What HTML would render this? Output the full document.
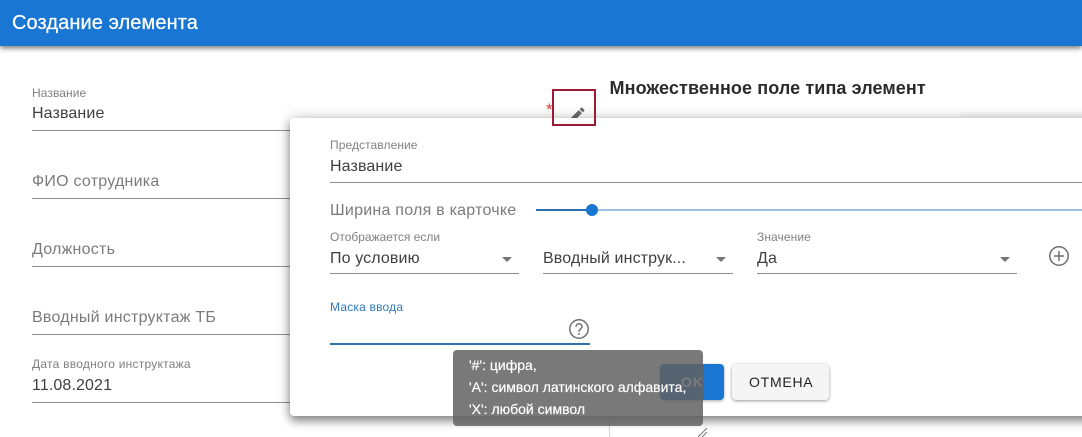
<!DOCTYPE html>
<html lang="ru"><head><meta charset="utf-8"><title>Создание элемента</title>
<style>
html,body{margin:0;padding:0;background:#fff}
#p{position:relative;width:1082px;height:437px;overflow:hidden;background:#fff;font-family:"Liberation Sans",sans-serif;color:#3c3c3c}
.t{position:absolute;white-space:nowrap;line-height:1}
.l{font-size:12px;color:#808080;letter-spacing:.08px}
.v{font-size:16px;color:#3f3f3f;letter-spacing:.12px}
.g{font-size:16px;color:#7b7b7b;letter-spacing:.24px}
.u{position:absolute;height:1px;background:#8e8e8e}
.a{position:absolute;width:0;height:0;border-left:5px solid transparent;border-right:5px solid transparent;border-top:5px solid #757575}
.tip{font-size:14px;color:#fff;-webkit-text-stroke:.2px #fff}
</style></head><body><div id="p">
<div style="position:absolute;left:0;top:0;width:1082px;height:46px;background:#1976d2;box-shadow:0 2px 5px rgba(0,0,0,.55);z-index:2"></div>
<div class="t" style="left:12px;top:13px;font-size:20px;letter-spacing:.1px;color:#fff;-webkit-text-stroke:.25px #fff;z-index:3">Создание элемента</div>

<div class="t l" style="left:32px;top:87px">Название</div>
<div class="t v" style="left:32px;top:106px">Название</div>
<div class="u" style="left:32px;top:130px;width:258px"></div>
<div class="t g" style="left:32px;top:174px">ФИО сотрудника</div>
<div class="u" style="left:32px;top:198px;width:258px"></div>
<div class="t g" style="left:32px;top:242px">Должность</div>
<div class="u" style="left:32px;top:266px;width:258px"></div>
<div class="t g" style="left:32px;top:310px">Вводный инструктаж ТБ</div>
<div class="u" style="left:32px;top:334px;width:258px"></div>
<div class="t l" style="left:32px;top:358px;letter-spacing:.24px">Дата вводного инструктажа</div>
<div class="t v" style="left:32px;top:378px">11.08.2021</div>
<div class="u" style="left:32px;top:402px;width:258px"></div>

<div class="t" style="left:546px;top:101px;font-size:17px;color:#e53935">*</div>
<div class="t" style="left:609.500px;top:79px;font-size:18px;font-weight:700;letter-spacing:.1px;color:#2b2b2b">Множественное поле типа элемент</div>
<div style="position:absolute;left:960px;top:112px;width:122px;height:12px;background:#f9f9f9;border-radius:4px 0 0 0"></div>
<div style="position:absolute;left:609px;top:416px;width:1px;height:21px;background:#d8d8d8"></div>
<svg style="position:absolute;left:698px;top:428px" width="10" height="9"><path d="M0 9L9 0M4 9L9 4" stroke="#777" stroke-width="1" fill="none"/></svg>
<svg style="position:absolute;left:566.500px;top:104.500px" width="20" height="20" viewBox="0 0 24 24"><path d="M3 17.250V21h3.750L17.810 9.940l-3.750-3.750L3 17.250zM20.710 7.040c.39-.39.39-1.020 0-1.410l-2.340-2.340c-.39-.39-1.020-.39-1.410 0l-1.830 1.830 3.750 3.750 1.830-1.830z" fill="#6a6a6a"/></svg>

<div style="position:absolute;left:290px;top:118px;width:830px;height:298px;background:#fff;border-radius:4px;box-shadow:0 5px 9px rgba(0,0,0,.4),0 0 14px rgba(0,0,0,.22)"></div>

<div style="position:absolute;left:552px;top:89px;width:44px;height:37px;box-sizing:border-box;border:2px solid #9b1c34"></div>

<div class="t l" style="left:330px;top:139px">Представление</div>
<div class="t v" style="left:330px;top:159px">Название</div>
<div class="u" style="left:330px;top:182px;width:752px"></div>
<div class="t g" style="left:330px;top:203px">Ширина поля в карточке</div>
<div style="position:absolute;left:536px;top:209px;width:546px;height:2px;background:#9ac3e3"></div>
<div style="position:absolute;left:536px;top:209px;width:56px;height:2px;background:#2c6fb0"></div>
<div style="position:absolute;left:586px;top:204px;width:12px;height:12px;border-radius:50%;background:#1976d2"></div>

<div class="t l" style="left:330px;top:231px;letter-spacing:0">Отображается если</div>
<div class="t v" style="left:330px;top:251px">По условию</div>
<div class="a" style="left:502px;top:257px"></div>
<div class="u" style="left:330px;top:273px;width:189px"></div>
<div class="t v" style="left:543px;top:251px">Вводный инструк...</div>
<div class="a" style="left:716px;top:257px"></div>
<div class="u" style="left:543px;top:273px;width:190px"></div>
<div class="t l" style="left:757px;top:231px">Значение</div>
<div class="t v" style="left:757px;top:251px">Да</div>
<div class="a" style="left:1000px;top:257px"></div>
<div class="u" style="left:757px;top:273px;width:260px"></div>
<svg style="position:absolute;left:1048px;top:245px" width="22" height="22" viewBox="0 0 22 22"><circle cx="11" cy="11" r="9.200" fill="none" stroke="#6f6f6f" stroke-width="1.500"/><path d="M11 6V16M6 11H16" stroke="#6f6f6f" stroke-width="1.500"/></svg>

<div class="t" style="left:330px;top:301px;font-size:12px;letter-spacing:.2px;color:#2f79bd">Маска ввода</div>
<svg style="position:absolute;left:567.500px;top:318px" width="22" height="22" viewBox="0 0 22 22"><circle cx="11" cy="11" r="9.200" fill="none" stroke="#6f6f6f" stroke-width="1.500"/><path d="M8 8.800C8 4.800 14 4.800 14 8.600C14 11 11 11 11 13.800" fill="none" stroke="#6f6f6f" stroke-width="1.500"/><rect x="10.200" y="15" width="1.600" height="1.800" fill="#6f6f6f"/></svg>
<div style="position:absolute;left:330px;top:343px;width:260px;height:2px;background:#2f72b0"></div>

<div style="position:absolute;left:660px;top:364px;width:64px;height:36px;background:#1976d2;border-radius:4px;box-shadow:0 1px 3px rgba(0,0,0,.35)"></div>
<div class="t" style="left:681px;top:375px;font-size:14px;font-weight:700;color:#fff;letter-spacing:1px">OK</div>
<div style="position:absolute;left:732px;top:364px;width:97px;height:36px;background:#f5f5f5;border-radius:4px;box-shadow:0 1px 3px rgba(0,0,0,.4)"></div>
<div class="t" style="left:749px;top:375px;font-size:14px;color:#222;letter-spacing:.75px">ОТМЕНА</div>

<div style="position:absolute;left:453px;top:350px;width:250px;height:76px;background:rgba(97,97,97,.85);border-radius:4px"></div>
<div class="t tip" style="left:469px;top:358px">'#': цифра,</div>
<div class="t tip" style="left:469px;top:380px">'A': символ латинского алфавита,</div>
<div class="t tip" style="left:469px;top:402px">'X': любой символ</div>
</div></body></html>
